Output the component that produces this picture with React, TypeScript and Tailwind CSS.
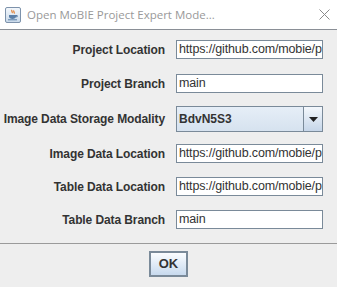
export default function App() {
  const rows: { label: string; value: string; combo?: boolean; mt: string }[] = [
    { label: "Project Location", value: "https://github.com/mobie/p", mt: "mt-[10px]" },
    { label: "Project Branch", value: "main", mt: "mt-[15px]" },
    { label: "Image Data Storage Modality", value: "BdvN5S3", combo: true, mt: "mt-[13px]" },
    { label: "Image Data Location", value: "https://github.com/mobie/p", mt: "mt-[12px]" },
    { label: "Table Data Location", value: "https://github.com/mobie/p", mt: "mt-[14px]" },
    { label: "Table Data Branch", value: "main", mt: "mt-[14px]" },
  ];

  return (
    <div className="w-[337px] h-[287px] bg-[#eeeeee] overflow-hidden font-['Liberation_Sans',Arial,sans-serif] flex flex-col">
      {/* Title bar */}
      <div className="h-[30px] shrink-0 bg-white border-b border-[#8a8f96] flex items-center">
        <svg className="ml-[5px]" width="16" height="16" viewBox="0 0 16 16">
          <defs>
            <linearGradient id="ic" x1="0" y1="0" x2="0" y2="1">
              <stop offset="0" stopColor="#f4f8fc" />
              <stop offset="1" stopColor="#c9d9ea" />
            </linearGradient>
          </defs>
          <rect x="0.5" y="0.5" width="15" height="15" rx="1.5" fill="url(#ic)" stroke="#7d92ab" />
          <path d="M7 3c-1 1 1 2 0 3M9 3.5c-1 1 1 2 0 3" stroke="#e07a2a" strokeWidth="1.2" fill="none" />
          <path d="M4 8h7v1.5c0 1.5-1.5 2.5-3.5 2.5S4 11 4 9.5z" fill="#5a7fa8" />
          <path d="M11 8.5h1.2v1.3H11" stroke="#5a7fa8" fill="none" />
          <path d="M3 12.8h9" stroke="#5a7fa8" strokeWidth="1" />
        </svg>
        <span className="ml-[6px] text-[11.5px] text-[#999999] font-['Open_Sans',sans-serif]">
          Open MoBIE Project Expert Mode...
        </span>
        <svg className="ml-auto mr-[7px]" width="11" height="11" viewBox="0 0 11 11">
          <path d="M0.5 0.5l10 10M10.5 0.5l-10 10" stroke="#8a8a8a" strokeWidth="1" />
        </svg>
      </div>

      {/* Form */}
      <div className="flex flex-col">
        {rows.map((r) => (
          <div key={r.label} className={`flex items-center ${r.mt}`}>
            <div className="w-[165px] text-right text-[12px] font-bold text-[#333333] whitespace-nowrap tracking-[-0.1px]">
              {r.label}
            </div>
            {r.combo ? (
              <div className="ml-[11px] w-[147px] h-[26px] flex border border-[#7a8a99] bg-gradient-to-b from-[#e6eef7] to-[#d6e2ef]">
                <div className="flex-1 flex items-center pl-[2px] text-[12px] font-bold text-[#333333]">{r.value}</div>
                <div className="w-[19px] border-l border-[#7a8a99] flex items-center justify-center bg-gradient-to-b from-[#f4f8fc] to-[#c6d6e9]">
                  <svg width="9" height="5" viewBox="0 0 9 5">
                    <path d="M0 0h9L4.5 5z" fill="#222222" />
                  </svg>
                </div>
              </div>
            ) : (
              <div className="ml-[11px] w-[147px] h-[19px] bg-white border border-[#7a8a99] flex items-center pl-[2px] overflow-hidden">
                <span className="text-[12.5px] tracking-[-0.15px] text-[#333333] whitespace-nowrap">{r.value}</span>
              </div>
            )}
          </div>
        ))}
      </div>

      {/* Footer */}
      <div className="mt-[14px] border-t border-[#9a9a9a]" />
      <div className="flex justify-center mt-[7px]">
        <div className="w-[39px] h-[26px] border-2 border-[#7a8a99] bg-gradient-to-b from-[#fbfdff] to-[#c8daee] flex items-center justify-center text-[13px] font-bold text-[#333333]">
          OK
        </div>
      </div>
    </div>
  );
}
